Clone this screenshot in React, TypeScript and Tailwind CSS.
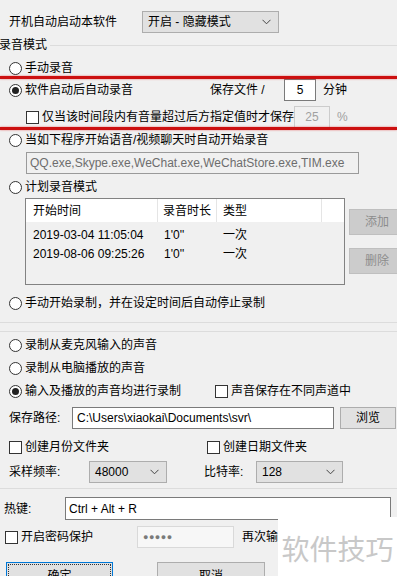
import React from "react";

function Radio({ checked = false }: { checked?: boolean }) {
  return (
    <span className="flex h-[13px] w-[13px] shrink-0 items-center justify-center rounded-full border border-[#333333] bg-white">
      {checked && <span className="h-[7px] w-[7px] rounded-full bg-[#222222]" />}
    </span>
  );
}

function Check() {
  return <span className="block h-[13px] w-[13px] shrink-0 border border-[#333333] bg-white" />;
}

function Chevron() {
  return (
    <svg width="9" height="6" viewBox="0 0 9 6" className="shrink-0">
      <polyline points="0.5,0.8 4.5,4.8 8.5,0.8" fill="none" stroke="#444" strokeWidth="1" />
    </svg>
  );
}

function Select({ text, className }: { text: string; className: string }) {
  return (
    <div className={`flex h-[22px] items-center justify-between border border-[#adadad] bg-[#e1e1e1] pl-[5px] pr-[7px] ${className}`}>
      <span>{text}</span>
      <Chevron />
    </div>
  );
}

export default function App() {
  return (
    <div className="relative h-[576px] w-[397px] overflow-hidden bg-[#f0f0f0] font-['Liberation_Sans','Noto_Sans_CJK_SC',sans-serif] text-[12px] leading-[16px] text-black">
      {/* row 1 */}
      <div className="mt-[11px] flex h-[22px] items-center">
        <span className="w-[142px] shrink-0 pl-[9px]">开机自动启动本软件</span>
        <Select text="开启 - 隐藏模式" className="w-[137px] shrink-0" />
      </div>

      {/* group label */}
      <div className="mt-[4px] flex h-[16px] items-center">
        <span className="ml-[-1px]">录音模式</span>
        <span className="ml-[3px] h-px flex-1 bg-[#dcdcdc]" />
      </div>

      <div className="mt-[7px] flex h-[16px] items-center pl-[9px]">
        <Radio />
        <span className="ml-[3px]">手动录音</span>
      </div>

      <div className="mt-[3px] flex h-[22px] items-center">
        <div className="flex w-[210px] shrink-0 items-center pl-[9px]">
          <Radio checked />
          <span className="ml-[3px]">软件启动后自动录音</span>
        </div>
        <span className="w-[74px] shrink-0">保存文件 /</span>
        <div className="flex h-[22px] w-[32px] shrink-0 items-center justify-center border border-[#7a7a7a] bg-white">5</div>
        <span className="ml-[7px]">分钟</span>
      </div>

      <div className="mt-[5px] flex h-[22px] items-center">
        <div className="flex w-[294px] shrink-0 items-center pl-[26px]">
          <Check />
          <span className="ml-[3px] whitespace-nowrap">仅当该时间段内有音量超过后方指定值时才保存</span>
        </div>
        <div className="flex h-[22px] w-[36px] shrink-0 items-center justify-center border border-[#cccccc] bg-[#f0f0f0] text-[#a0a0a0]">25</div>
        <span className="ml-[7px] text-[#a0a0a0]">%</span>
      </div>

      <div className="mt-[4px] flex h-[16px] items-center pl-[9px]">
        <Radio />
        <span className="ml-[3px] whitespace-nowrap">当如下程序开始语音/视频聊天时自动开始录音</span>
      </div>

      <div className="ml-[26px] mt-[4px] flex h-[22px] w-[333px] items-center overflow-hidden border border-[#9a9a9a] bg-[#f0f0f0] pl-[3px] text-[#6d6d6d] whitespace-nowrap">
        QQ.exe,Skype.exe,WeChat.exe,WeChatStore.exe,TIM.exe
      </div>

      <div className="mt-[5px] flex h-[16px] items-center pl-[9px]">
        <Radio />
        <span className="ml-[3px]">计划录音模式</span>
      </div>

      <div className="mt-[3px] flex h-[87px]">
        <div className="ml-[25px] h-[87px] w-[320px] shrink-0 border border-[#828282] bg-[#f0f0f0]">
          <div className="flex h-[23px] items-center bg-white">
            <span className="flex h-full w-[132px] items-center border-r border-[#e5e5e5] pl-[7px]">开始时间</span>
            <span className="flex h-full w-[59px] items-center border-r border-[#e5e5e5] pl-[5px]">录音时长</span>
            <span className="flex h-full w-[105px] items-center border-r border-[#e5e5e5] pl-[6px]">类型</span>
          </div>
          <div className="pt-[3px]">
            <div className="flex h-[19px] items-center">
              <span className="w-[132px] pl-[7px]">2019-03-04 11:05:04</span>
              <span className="w-[59px] pl-[6px]">1'0''</span>
              <span className="pl-[6px]">一次</span>
            </div>
            <div className="flex h-[19px] items-center">
              <span className="w-[132px] pl-[7px]">2019-08-06 09:25:26</span>
              <span className="w-[59px] pl-[6px]">1'0''</span>
              <span className="pl-[6px]">一次</span>
            </div>
          </div>
        </div>
        <div className="ml-[4px] flex w-[56px] shrink-0 flex-col gap-[13px] pt-[11px]">
          <div className="flex h-[26px] items-center justify-center border border-[#bfbfbf] bg-[#cccccc] text-[#8c8c8c]">添加</div>
          <div className="flex h-[26px] items-center justify-center border border-[#bfbfbf] bg-[#cccccc] text-[#8c8c8c]">删除</div>
        </div>
      </div>

      <div className="mt-[10px] flex h-[16px] items-center pl-[9px]">
        <Radio />
        <span className="ml-[3px] whitespace-nowrap">手动开始录制，并在设定时间后自动停止录制</span>
      </div>

      <div className="mt-[11px] h-px bg-[#dcdcdc]" />
      <div className="mt-[8px] h-px bg-[#dcdcdc]" />

      <div className="mt-[5px] flex h-[16px] items-center pl-[9px]">
        <Radio />
        <span className="ml-[3px]">录制从麦克风输入的声音</span>
      </div>
      <div className="mt-[7px] flex h-[16px] items-center pl-[9px]">
        <Radio />
        <span className="ml-[3px]">录制从电脑播放的声音</span>
      </div>
      <div className="mt-[7px] flex h-[16px] items-center">
        <div className="flex w-[215px] shrink-0 items-center pl-[9px]">
          <Radio checked />
          <span className="ml-[3px]">输入及播放的声音均进行录制</span>
        </div>
        <Check />
        <span className="ml-[3px]">声音保存在不同声道中</span>
      </div>

      <div className="mt-[8px] flex h-[22px] items-center">
        <span className="w-[72px] shrink-0 pl-[9px]">保存路径:</span>
        <div className="flex h-[22px] w-[262px] shrink-0 items-center border border-[#7a7a7a] bg-white pl-[4px] whitespace-nowrap">
          C:\Users\xiaokai\Documents\svr\
        </div>
        <div className="ml-[6px] flex h-[22px] w-[56px] shrink-0 items-center justify-center border border-[#adadad] bg-[#e1e1e1]">浏览</div>
      </div>

      <div className="mt-[10px] flex h-[16px] items-center">
        <div className="flex w-[207px] shrink-0 items-center pl-[9px]">
          <Check />
          <span className="ml-[3px]">创建月份文件夹</span>
        </div>
        <Check />
        <span className="ml-[3px]">创建日期文件夹</span>
      </div>

      <div className="mt-[6px] flex h-[22px] items-center">
        <span className="w-[89px] shrink-0 pl-[9px]">采样频率:</span>
        <Select text="48000" className="w-[78px] shrink-0" />
        <span className="ml-[37px] w-[52px] shrink-0">比特率:</span>
        <Select text="128" className="w-[87px] shrink-0" />
      </div>

      <div className="mt-[5px] h-px bg-[#dcdcdc]" />

      <div className="mt-[8px] flex h-[23px] items-center">
        <span className="w-[65px] shrink-0 pl-[4px]">热键:</span>
        <div className="flex h-[23px] w-[326px] shrink-0 items-center border border-[#7a7a7a] bg-white pl-[3px]">Ctrl + Alt + R</div>
      </div>

      <div className="mt-[6px] flex h-[22px] items-center">
        <div className="flex w-[137px] shrink-0 items-center pl-[5px]">
          <Check />
          <span className="ml-[3px]">开启密码保护</span>
        </div>
        <div className="flex h-[22px] w-[97px] shrink-0 items-center border border-[#d9d9d9] bg-[#f7f7f7] pl-[5px] text-[9px] tracking-[0.5px] text-[#7a7a7a]">●●●●●</div>
        <span className="ml-[8px] whitespace-nowrap">再次输</span>
      </div>

      <div className="mt-[14px] flex h-[28px]">
        <div className="ml-[6px] flex h-[28px] w-[107px] shrink-0 items-center justify-center border border-[#0078d7] bg-[#e1e1e1] outline-1 outline-dotted outline-offset-[-3px] outline-[#333]">
          确定
        </div>
        <div className="ml-[44px] flex h-[28px] w-[108px] shrink-0 items-center justify-center border border-[#adadad] bg-[#e1e1e1]">取消</div>
      </div>

      {/* annotation red lines */}
      <div className="absolute left-0 top-[76px] h-[3px] w-full bg-[#cc1010] shadow-[0_0_2px_rgba(220,0,0,0.6)]" />
      <div className="absolute left-0 top-[127px] h-[3px] w-full bg-[#cc1010] shadow-[0_0_2px_rgba(220,0,0,0.6)]" />

      {/* watermark */}
      <div className="absolute left-[278px] top-[517px] flex h-[59px] w-[119px] items-center justify-center bg-white pt-[2px] font-['Noto_Sans_CJK_SC',sans-serif] text-[28px] leading-[32px] text-[#c8c8c8]">
        软件技巧
      </div>
    </div>
  );
}
